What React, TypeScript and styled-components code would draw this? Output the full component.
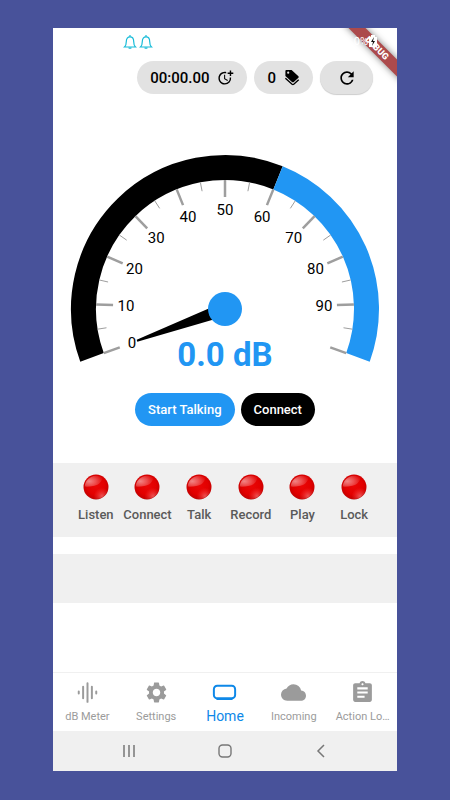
import React from "react";
import styled, { createGlobalStyle } from "styled-components";
import { MdAssignment, MdCloud, MdMoreTime, MdRefresh, MdSettings } from "react-icons/md";

const blue = "#2196f3";

const GlobalStyle = createGlobalStyle`
  *, *::before, *::after { box-sizing: border-box; }
  body {
    margin: 0;
    background: #48529a;
    font-family: Roboto, "Liberation Sans", sans-serif;
  }
  button { font: inherit; border: 0; padding: 0; background: none; cursor: pointer; }
`;

const Page = styled.div`
  display: flex;
  min-height: 100vh;
  padding: 28px 53px 29px;
`;

const Phone = styled.div`
  position: relative;
  display: flex;
  flex: 1;
  flex-direction: column;
  min-width: 0;
  overflow: hidden;
  background: #fff;
`;

const StatusBar = styled.header`
  display: flex;
  justify-content: space-between;
  height: 33px;
  padding: 6px 19px 0 70px;
`;

const Alerts = styled.div`
  display: flex;
  gap: 2px;
`;

const Battery = styled.div`
  display: flex;
  align-items: center;
  z-index: 2;
  height: 14px;
  color: #fff;
  font-size: 11px;
`;

const Ribbon = styled.div`
  position: absolute;
  top: 14px;
  right: -20px;
  z-index: 1;
  width: 80px;
  height: 12px;
  background: #ac4a4c;
  box-shadow: 0 0 7px rgba(0, 0, 0, 0.5);
  color: #fff;
  font-size: 9px;
  font-weight: 900;
  line-height: 12px;
  text-align: center;
  transform: rotate(45deg);
`;

const Toolbar = styled.div`
  display: flex;
  justify-content: flex-end;
  gap: 7px;
  padding-right: 24px;
`;

const Chip = styled.button<{ $raised?: boolean }>`
  display: flex;
  align-items: center;
  justify-content: center;
  gap: 8px;
  min-width: 53px;
  height: 33px;
  padding: 0 13px;
  border-radius: 17px;
  background: #e2e2e2;
  box-shadow: ${(p) => (p.$raised ? "0 1px 1px rgba(0, 0, 0, 0.2)" : "none")};
  color: #000;
  && {
    font-size: 15px;
    font-weight: 500;
  }
`;

const GaugeFigure = styled.div`
  display: flex;
  justify-content: center;
  margin-top: 56px;
`;

const Actions = styled.div`
  display: flex;
  justify-content: center;
  gap: 6px;
  margin-top: 18px;
`;

const ActionButton = styled.button<{ $color: string }>`
  height: 33px;
  padding: 0 13px;
  border-radius: 17px;
  background: ${(p) => p.$color};
  color: #fff;
  && {
    font-size: 13px;
    font-weight: 500;
  }
`;

const Lamps = styled.section`
  display: grid;
  grid-template-columns: repeat(6, 1fr);
  height: 74px;
  margin-top: 37px;
  padding: 11px 17px 0;
  background: #f0f0f0;
`;

const Lamp = styled.div`
  display: flex;
  flex-direction: column;
  align-items: center;
  gap: 6px;
  color: #5a5a5a;
  font-size: 13px;
  font-weight: 500;
  line-height: 18px;
`;

const MessagePanel = styled.section`
  height: 49px;
  margin-top: 17px;
  background: #f0f0f0;
`;

const Tabs = styled.nav`
  display: grid;
  grid-template-columns: repeat(5, 1fr);
  height: 59px;
  margin-top: auto;
  border-top: 1px solid #f0f0f0;
`;

const Tab = styled.button<{ $active?: boolean }>`
  display: flex;
  flex-direction: column;
  align-items: center;
  gap: 4px;
  min-width: 0;
  color: ${(p) => (p.$active ? "#0e88e8" : "#9b9b9b")};
  white-space: nowrap;
  && {
    font-size: ${(p) => (p.$active ? "14px" : "11px")};
    line-height: ${(p) => (p.$active ? "14px" : "16px")};
    padding-top: 7px;
  }
`;

const SystemBar = styled.div`
  display: grid;
  grid-template-columns: repeat(3, 1fr);
  height: 40px;
  padding: 0 28px;
  background: #f0f0f0;
`;

const SystemButton = styled.button`
  display: flex;
  align-items: center;
  justify-content: center;
`;

function BellIcon() {
  return (
    <svg width="14" height="16" viewBox="0 0 14 16" fill="none" stroke="#16bbd8" strokeWidth="1.2">
      <path d="M1.5 13 C3 11.6 3.3 10 3.3 7.5 C3.3 4.5 4.7 2.8 7 2.8 C9.3 2.8 10.7 4.5 10.7 7.5 C10.7 10 11 11.6 12.5 13 Z" />
      <path d="M7 1v1.8M5.8 13.5c.3 1 2.1 1 2.4 0" />
    </svg>
  );
}

function TagIcon() {
  return (
    <svg width="16" height="18" viewBox="0 0 16 18">
      <path
        fillRule="evenodd"
        d="M2.3 1 H7.6 L14.4 7.2 Q15.2 8 14.4 8.8 L9.8 13 Q8.9 13.7 8 13 L1.4 7 V2 Q1.4 1 2.3 1 Z M4.2 2.6 A1.1 1.1 0 1 0 4.2 4.8 A1.1 1.1 0 1 0 4.2 2.6 Z"
      />
      <path d="M1.4 9.3 L8.1 15.3 Q8.9 15.9 9.7 15.3 L14.7 10.8" fill="none" stroke="#000" strokeWidth="1.4" />
    </svg>
  );
}

function LampIcon() {
  return (
    <svg width="26" height="26" viewBox="0 0 26 26">
      <defs>
        <radialGradient id="lampBody" cx="0.5" cy="0.45" r="0.55">
          <stop offset="0" stopColor="#ea0606" />
          <stop offset="0.65" stopColor="#e20000" />
          <stop offset="0.9" stopColor="#cc0000" />
          <stop offset="1" stopColor="#b01010" />
        </radialGradient>
        <radialGradient id="lampShine" cx="0.25" cy="0.5" r="0.75">
          <stop offset="0" stopColor="#fff" stopOpacity="0.52" />
          <stop offset="0.5" stopColor="#fff" stopOpacity="0.3" />
          <stop offset="1" stopColor="#fff" stopOpacity="0.05" />
        </radialGradient>
        <radialGradient id="lampGlow" cx="0.75" cy="0.88" r="0.35">
          <stop offset="0" stopColor="#ff8c8c" stopOpacity="0.6" />
          <stop offset="1" stopColor="#ff5050" stopOpacity="0" />
        </radialGradient>
      </defs>
      <circle cx="13" cy="13" r="12.5" fill="url(#lampBody)" />
      <circle cx="13" cy="13" r="12" fill="url(#lampGlow)" />
      <path d="M1.8 12.6 A11.3 11.3 0 0 1 19.5 3.8 C18.5 8 16 10.8 11.5 11.8 C8 12.5 4.5 12.8 1.8 12.6Z" fill="url(#lampShine)" />
    </svg>
  );
}

function MeterIcon() {
  return (
    <svg width="25" height="25" viewBox="0 0 24 24" stroke="currentColor" strokeWidth="1.9" strokeLinecap="round">
      <path d="M3.6 11v2M7.8 6.4v11.2M12 3v18M16.2 6.4v11.2M20.4 11v2" />
    </svg>
  );
}

function HomeIcon() {
  return (
    <svg width="25" height="25" viewBox="0 0 24 24" fill="none" stroke="currentColor">
      <rect x="1.8" y="5.6" width="20.4" height="12" rx="3.2" strokeWidth="1.9" />
      <path d="M5 18.3h14" strokeWidth="2" strokeLinecap="round" />
    </svg>
  );
}

const centre = { x: 155, y: 159 };
const point = (radius: number, value: number) => {
  const angle = ((160 + value * 2.2) * Math.PI) / 180;
  return { x: centre.x + radius * Math.cos(angle), y: centre.y + radius * Math.sin(angle) };
};
const arc = (from: number, to: number) => {
  const a = point(141.5, from);
  const b = point(141.5, to);
  return `M${a.x} ${a.y} A141.5 141.5 0 0 1 ${b.x} ${b.y}`;
};
const ticks = Array.from({ length: 21 }, (_, i) => i * 5);

function Gauge() {
  return (
    <svg width="310" height="225" viewBox="0 0 310 225" role="img" aria-label="Sound level 0.0 dB">
      <path d={arc(0, 60)} fill="none" stroke="#000" strokeWidth="25" />
      <path d={arc(60, 100)} fill="none" stroke={blue} strokeWidth="25" />
      {ticks.map((value) => {
        const major = value % 10 === 0;
        const a = point(129, value);
        const b = point(major ? 112 : 120, value);
        return (
          <line key={value} x1={a.x} y1={a.y} x2={b.x} y2={b.y} stroke="#9e9e9e" strokeWidth={major ? 2.5 : 1} />
        );
      })}
      {ticks
        .filter((value) => value % 10 === 0 && value < 100)
        .map((value) => {
          const p = point(99, value);
          return (
            <text key={value} x={p.x} y={p.y + 5} fontSize="15" textAnchor="middle">
              {value}
            </text>
          );
        })}
      <path d="M155 159 L152.6 152.4 L66.7 189.7 L67.3 191.8 L157.4 165.6 Z" />
      <circle cx="155" cy="159" r="17" fill={blue} />
      <text x="155" y="216" fontSize="33" fontWeight="700" textAnchor="middle" fill={blue}>
        0.0 dB
      </text>
    </svg>
  );
}

const lamps = ["Listen", "Connect", "Talk", "Record", "Play", "Lock"];

const tabs = [
  { label: "dB Meter", icon: <MeterIcon /> },
  { label: "Settings", icon: <MdSettings size={25} /> },
  { label: "Home", icon: <HomeIcon />, active: true },
  { label: "Incoming", icon: <MdCloud size={25} /> },
  { label: "Action Lo…", icon: <MdAssignment size={25} /> },
];

export default function App() {
  return (
    <Page>
      <GlobalStyle />
      <Phone>
        <StatusBar>
          <Alerts>
            <BellIcon />
            <BellIcon />
          </Alerts>
          <Battery>
            0%
            <svg width="10" height="14" viewBox="0 0 10 14">
              <path d="M3 1h4v2h2v10H1V3h2z" fill="#fff" />
              <path d="M6 3 3 8h2l-1 4 3-5H5z" fill="#111" />
            </svg>
          </Battery>
        </StatusBar>
        <Ribbon>DEBUG</Ribbon>

        <Toolbar>
          <Chip>
            00:00.00
            <MdMoreTime size={17} />
          </Chip>
          <Chip>
            0
            <TagIcon />
          </Chip>
          <Chip $raised aria-label="Refresh">
            <MdRefresh size={20} />
          </Chip>
        </Toolbar>

        <GaugeFigure>
          <Gauge />
        </GaugeFigure>

        <Actions>
          <ActionButton $color={blue}>Start Talking</ActionButton>
          <ActionButton $color="#000">Connect</ActionButton>
        </Actions>

        <Lamps>
          {lamps.map((label) => (
            <Lamp key={label}>
              <LampIcon />
              {label}
            </Lamp>
          ))}
        </Lamps>
        <MessagePanel />

        <Tabs>
          {tabs.map((tab) => (
            <Tab key={tab.label} $active={tab.active}>
              {tab.icon}
              {tab.label}
            </Tab>
          ))}
        </Tabs>

        <SystemBar>
          <SystemButton aria-label="Recent apps">
            <svg width="14" height="14" viewBox="0 0 14 14" stroke="#777" strokeWidth="1.5">
              <path d="M2 1v12M7 1v12M12 1v12" />
            </svg>
          </SystemButton>
          <SystemButton aria-label="Home screen">
            <svg width="14" height="14" viewBox="0 0 14 14" fill="none" stroke="#777" strokeWidth="1.4">
              <rect x="1" y="1" width="12" height="12" rx="3.5" />
            </svg>
          </SystemButton>
          <SystemButton aria-label="Back">
            <svg width="14" height="14" viewBox="0 0 14 14" fill="none" stroke="#777" strokeWidth="1.5">
              <path d="M10 1 4 7l6 6" />
            </svg>
          </SystemButton>
        </SystemBar>
      </Phone>
    </Page>
  );
}
